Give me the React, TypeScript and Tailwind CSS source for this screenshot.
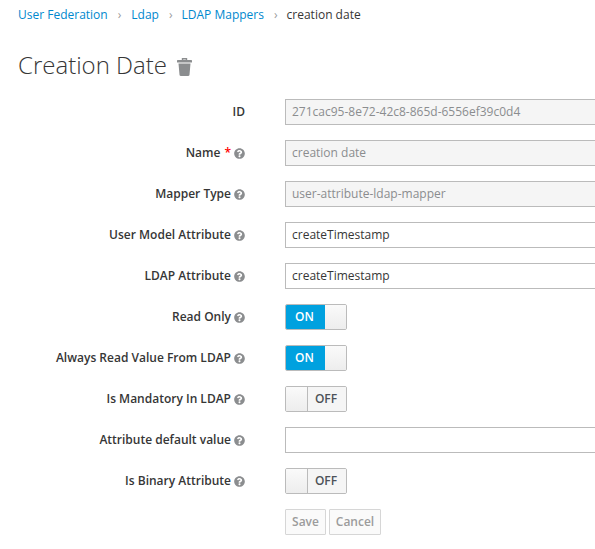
import { FaQuestionCircle } from "react-icons/fa";

type Row = {
    label: string;
    help?: boolean;
    required?: boolean;
    value?: string;
    disabled?: boolean;
    toggle?: boolean;
};

const rows: Row[] = [
    { label: "ID", value: "271cac95-8e72-42c8-865d-6556ef39c0d4", disabled: true },
    { label: "Name", help: true, required: true, value: "creation date", disabled: true },
    { label: "Mapper Type", help: true, value: "user-attribute-ldap-mapper", disabled: true },
    { label: "User Model Attribute", help: true, value: "createTimestamp" },
    { label: "LDAP Attribute", help: true, value: "createTimestamp" },
    { label: "Read Only", help: true, toggle: true },
    { label: "Always Read Value From LDAP", help: true, toggle: true },
    { label: "Is Mandatory In LDAP", help: true, toggle: false },
    { label: "Attribute default value", help: true, value: "" },
    { label: "Is Binary Attribute", help: true, toggle: false },
];

function Toggle({ on }: { on: boolean }) {
    if (on) {
        return (
            <div className="flex h-[26px] w-[62px] overflow-hidden rounded-[2px] border border-[#bbb]">
                <div className="flex w-[39px] items-center justify-center bg-[#00a1df] pr-[2px] text-[12px] font-semibold text-white">
                    ON
                </div>
                <div className="flex-1 bg-gradient-to-b from-[#fafafa] to-[#ededed]" />
            </div>
        );
    }
    return (
        <div className="flex h-[26px] w-[62px] overflow-hidden rounded-[2px] border border-[#bbb]">
            <div className="w-[22px] border-r border-[#bbb] bg-gradient-to-b from-[#fafafa] to-[#ededed]" />
            <div className="flex flex-1 items-center justify-center bg-[#f5f5f5] pr-[2px] text-[12px] font-semibold text-[#4d5258]">
                OFF
            </div>
        </div>
    );
}

function TrashIcon() {
    return (
        <svg width="15" height="18" viewBox="0 0 15 18" className="ml-[10px] mt-[3px]">
            <path d="M5.5 2V.8h4V2" fill="none" stroke="#8b8d8f" strokeWidth="1.4" />
            <rect x="0" y="2" width="15" height="2.6" rx="0.6" fill="#8b8d8f" />
            <path d="M1.5 5.6h12l-1 11.2c0 .7-.5 1.2-1.2 1.2H3.7c-.7 0-1.2-.5-1.2-1.2z" fill="#8b8d8f" />
        </svg>
    );
}

export default function App() {
    return (
        <div className="h-[549px] w-[595px] overflow-hidden bg-white font-['Open_Sans',sans-serif] text-[12px] text-[#363636]">

            {/* BREADCRUMB */}
            <div className="flex h-[29px] items-center pl-[18px] pt-[1px]">
                <span className="text-[#0088ce]">User Federation</span>
                <span className="px-[10px] text-[#9c9c9c]">&rsaquo;</span>
                <span className="text-[#0088ce]">Ldap</span>
                <span className="pl-[10px] pr-[9px] text-[#9c9c9c]">&rsaquo;</span>
                <span className="text-[#0088ce]">LDAP Mappers</span>
                <span className="pl-[10px] pr-[9px] text-[#9c9c9c]">&rsaquo;</span>
                <span>creation date</span>
            </div>

            {/* TITLE */}
            <div className="mt-[19px] flex h-[34px] items-center pl-[18px]">
                <h1 className="text-[24px] font-light leading-[34px]">Creation Date</h1>
                <TrashIcon />
            </div>

            {/* FORM */}
            <div className="mt-[17px] flex flex-col gap-[15px]">
                {rows.map((row) => (
                    <div key={row.label} className="flex h-[26px] items-center">
                        <div className="flex w-[245px] shrink-0 items-center justify-end font-semibold">
                            <span>{row.label}</span>
                            {row.required && <span className="ml-[4px] text-[#f00]">*</span>}
                            {row.help && <FaQuestionCircle className="ml-[3px] text-[11px] text-[#8b8d8f]" />}
                        </div>
                        <div className="ml-[40px] shrink-0">
                            {row.toggle !== undefined ? (
                                <Toggle on={row.toggle} />
                            ) : (
                                <input
                                    readOnly
                                    value={row.value}
                                    className={`h-[26px] w-[330px] border border-[#bbb] px-[6px] pb-[2px] text-[12px] outline-none ${row.disabled ? "bg-[#f5f5f5] text-[#8b8d8f]" : "bg-white text-[#363636]"}`}
                                />
                            )}
                        </div>
                    </div>
                ))}

                {/* ACTIONS */}
                <div className="ml-[285px] flex h-[26px] gap-[3px]">
                    <button className="h-[26px] w-[41px] rounded-[1px] border border-[#d6d6d6] bg-[#fafafa] font-semibold text-[#9c9c9c]">
                        Save
                    </button>
                    <button className="h-[26px] w-[52px] rounded-[1px] border border-[#d6d6d6] bg-[#fafafa] font-semibold text-[#9c9c9c]">
                        Cancel
                    </button>
                </div>
            </div>
        </div>
    );
}
